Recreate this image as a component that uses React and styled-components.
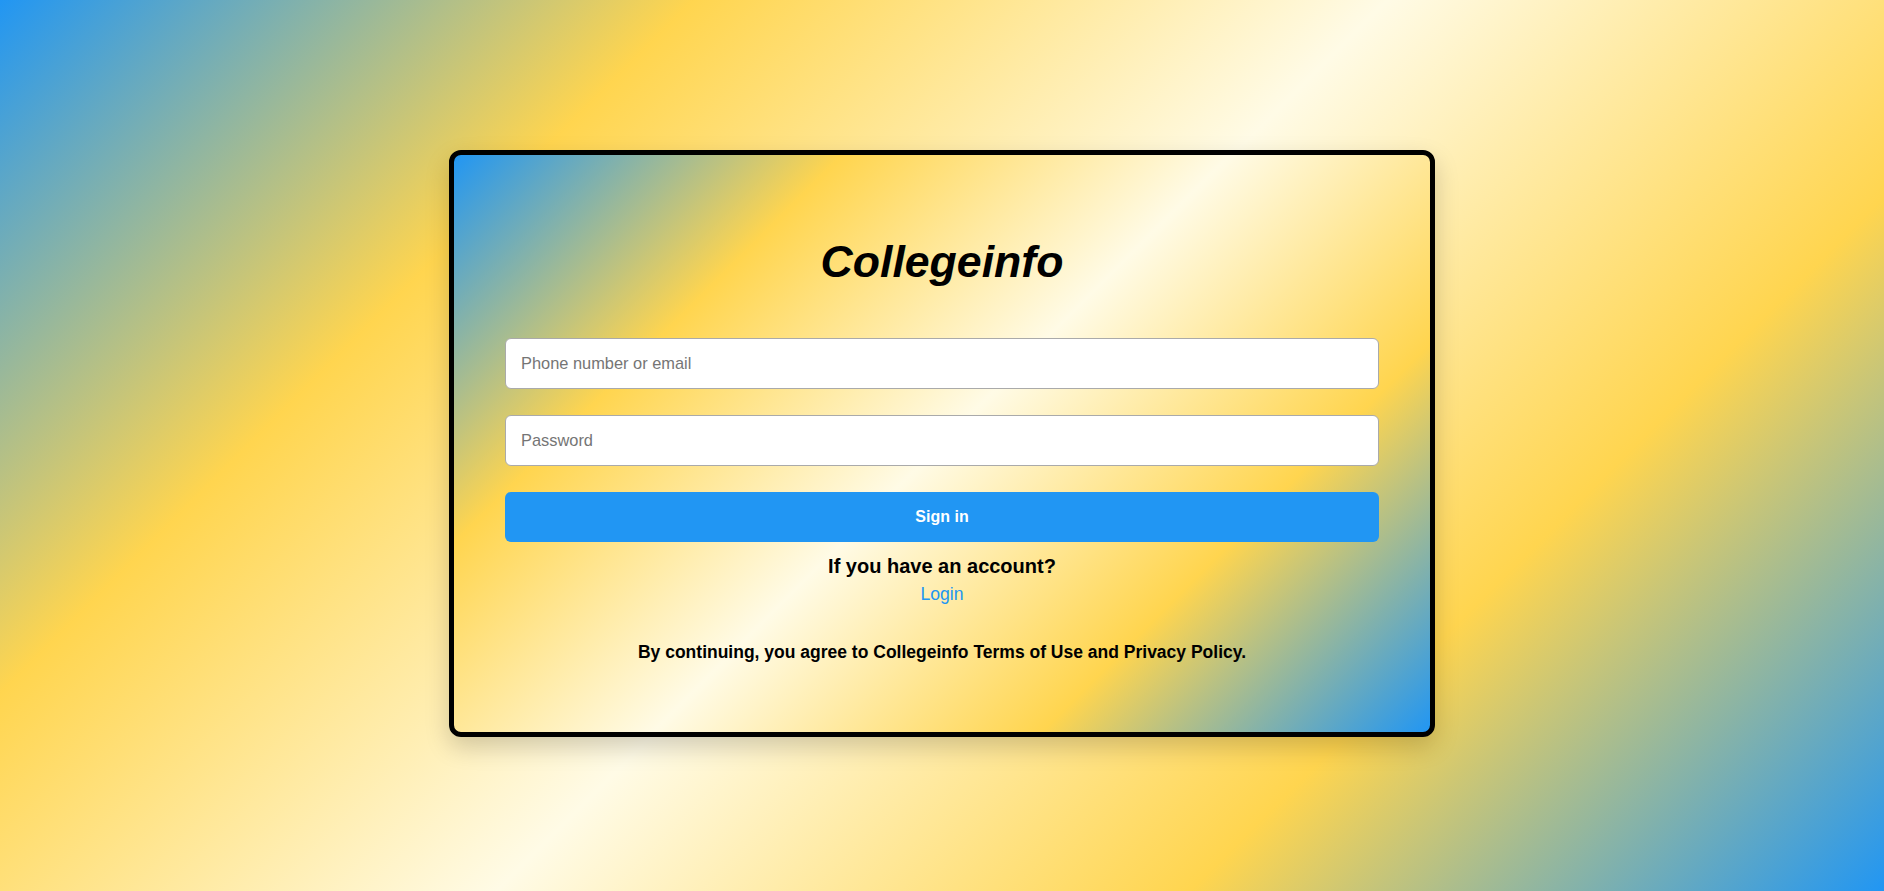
import React from "react";
import styled, { createGlobalStyle } from "styled-components";

const bg = `linear-gradient(135deg, #2196f3 0%, #ffd54f 25%, #fffbe6 50%, #ffd54f 75%, #2196f3 100%)`;

const GlobalStyle = createGlobalStyle`
    * {
        box-sizing: border-box;
    }
    html, body {
        margin: 0;
        padding: 0;
    }
    body {
        font-family: "Liberation Sans", Arial, sans-serif;
        background: ${bg};
        min-height: 100vh;
    }
`;

const Page = styled.div`
    min-height: 100vh;
    display: flex;
    align-items: center;
    justify-content: center;
    padding-bottom: 4px;
`;

const Card = styled.form`
    width: 986px;
    height: 587px;
    border: 5px solid #000;
    border-radius: 12px;
    background: ${bg};
    box-shadow: 0 10px 24px rgba(0, 0, 0, 0.18);
    padding: 80px 51px 0;
    display: flex;
    flex-direction: column;
    align-items: stretch;
`;

const Title = styled.h1`
    margin: 0 0 49px;
    font-size: 44.6px;
    line-height: 54px;
    font-style: italic;
    font-weight: bold;
    text-align: center;
    color: #000;
`;

const Input = styled.input`
    height: 51px;
    width: 100%;
    margin-bottom: ${props => props.gap || 26}px;
    padding: 0 15px;
    border: 1px solid #aaa;
    border-radius: 6px;
    background: #fff;
    font-family: inherit;
    font-size: 16.4px;
    outline: none;

    &::placeholder {
        color: #757575;
    }
`;

const Button = styled.button`
    height: 50px;
    width: 100%;
    border: none;
    border-radius: 6px;
    background: #2196f3;
    color: #fff;
    font-family: inherit;
    font-size: 16px;
    font-weight: bold;
    cursor: pointer;
`;

const Question = styled.p`
    margin: 13px 0 0;
    font-size: 20px;
    line-height: 23px;
    font-weight: bold;
    text-align: center;
    color: #000;
`;

const LoginLink = styled.a`
    margin-top: 6px;
    align-self: center;
    font-size: 17.6px;
    line-height: 20px;
    color: #2196f3;
    text-decoration: none;
    cursor: pointer;
`;

const Terms = styled.p`
    margin: 38px 0 0;
    font-size: 17.5px;
    line-height: 20px;
    font-weight: bold;
    text-align: center;
    color: #000;
`;

function App() {
    return (
        <>
            <GlobalStyle />
            <Page>
                <Card onSubmit={e => e.preventDefault()}>
                    <Title>Collegeinfo</Title>
                    <Input type="text" name="user" placeholder="Phone number or email" />
                    <Input type="password" name="password" placeholder="Password" />
                    <Button type="submit">Sign in</Button>
                    <Question>If you have an account?</Question>
                    <LoginLink href="#">Login</LoginLink>
                    <Terms>
                        By continuing, you agree to Collegeinfo Terms of Use and Privacy Policy.
                    </Terms>
                </Card>
            </Page>
        </>
    );
}

export default App;
